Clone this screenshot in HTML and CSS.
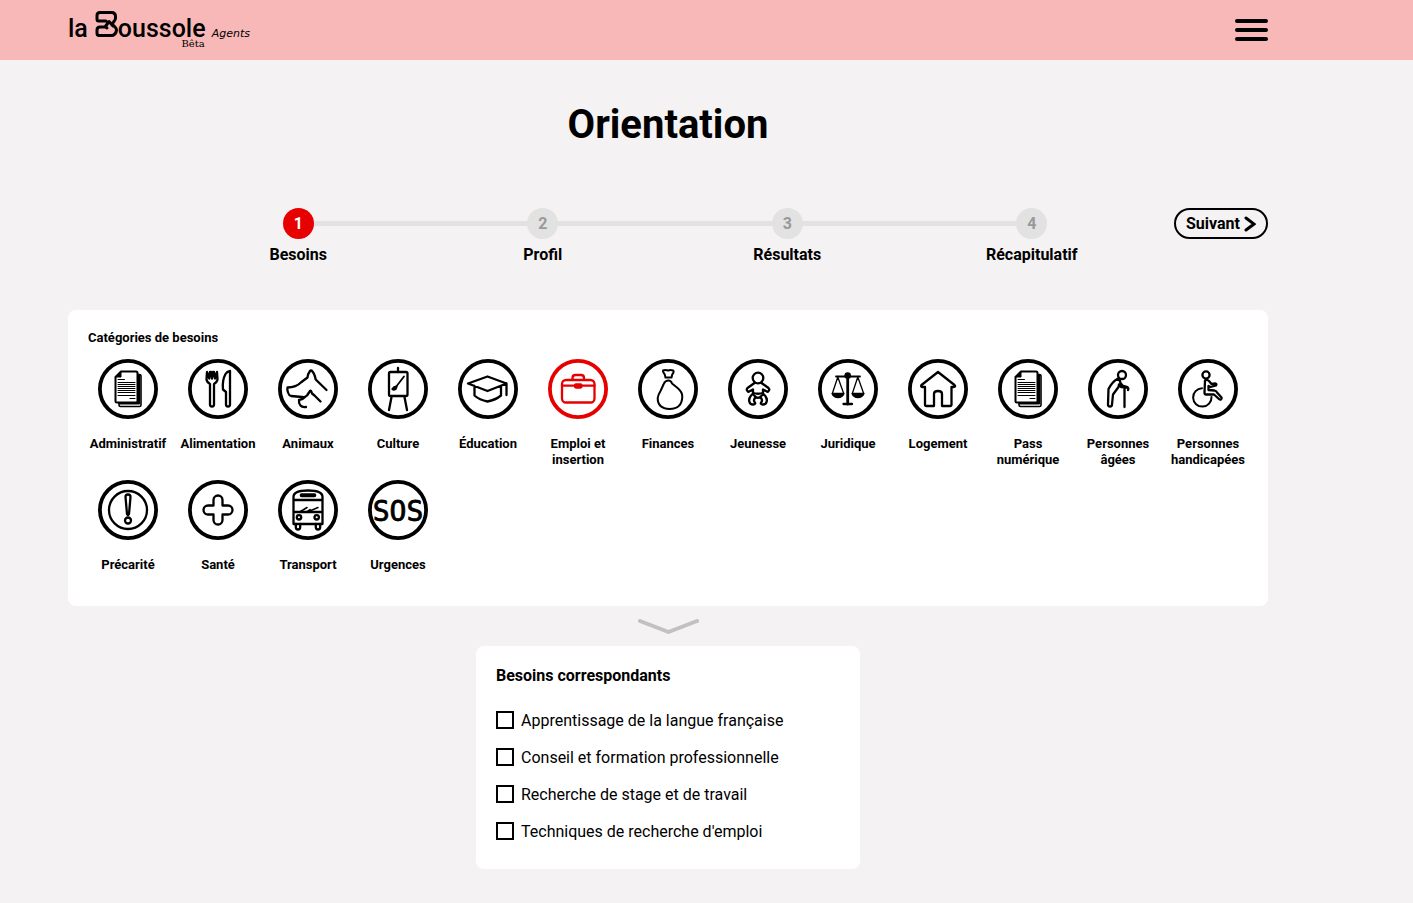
FILE: index.html
```html
<!DOCTYPE html>
<html lang="fr">
<head>
    <meta charset="UTF-8">
    <meta name="viewport" content="width=device-width, initial-scale=1.0">
    <title>La Boussole - Orientation</title>
    <link rel="stylesheet" href="styles.css">
</head>
<body>
    <svg class="sprite" aria-hidden="true">
        <symbol id="ring" viewBox="0 0 60 60">
            <circle cx="30" cy="30" r="28.1" fill="none" stroke-width="3.8"/>
        </symbol>
        <symbol id="documents" viewBox="0 0 60 60">
            <path d="M40 15.5h1.5q1.5 0 1.5 1.5v29q0 1.5-1.5 1.5h-19q-1.5 0-1.5-1.5v-2" fill="none" stroke-width="1.6"/>
            <path d="M41 16v28.5H22" fill="none" stroke-width="2.2"/>
            <path d="M23 12.5h15q1.5 0 1.5 1.5v28q0 1.5-1.5 1.5H19q-1.5 0-1.5-1.5V18z" fill="#fff" stroke-width="2"/>
            <path d="M23 12.5V18h-5.500z" fill="currentColor" stroke-width="1"/>
            <path d="M20 20.5h6.5M32 39.5h5" stroke-width="1"/>
            <path d="M20 23.5h17M20 25.5h17M20 27.5h17M20 29.5h17M20 31.5h17M20 33.5h17M20 36.5h17" stroke-width="1"/>
        </symbol>
    </svg>

    <header class="header">
        <div class="header-content">
            <a class="logo" href="#" aria-label="la Boussole Agents">
                <span>la</span>
                <svg class="logo-mark" viewBox="0 0 23 26" aria-hidden="true">
                    <path d="M11 10H3.5Q2 10 2 8V4.5Q2 1.5 5 1.5H16.5Q20.5 1.5 20.5 5.5V7Q20.5 9 19 10.500L17 13L20 16Q21.5 17.5 21.5 19Q21 24.5 16 24.5H4Q2 24.5 2 22V19Q2 16 5 16H10L14 10.5L18 15M10.5 16L12 17"/>
                </svg>
                <span class="logo-end">oussole<small class="beta">Bêta</small></span>
                <em class="agents">Agents</em>
            </a>
            <button class="burger" type="button" aria-label="Menu"><i></i><i></i><i></i></button>
        </div>
    </header>

    <main class="main">
        <h1>Orientation</h1>

        <div class="progress">
            <ol class="steps">
                <li class="step active"><span>1</span>Besoins</li>
                <li class="step"><span>2</span>Profil</li>
                <li class="step"><span>3</span>Résultats</li>
                <li class="step"><span>4</span>Récapitulatif</li>
            </ol>
            <button class="next" type="button">
                Suivant
                <svg viewBox="0 0 12 16" aria-hidden="true"><path d="M2 2l8 6-8 6"/></svg>
            </button>
        </div>

        <section class="categories">
            <h2>Catégories de besoins</h2>
            <div class="category-list">
                <button class="category" type="button">
                    <svg class="icon" viewBox="0 0 60 60"><use href="#ring"/><use href="#documents"/></svg>
                    Administratif
                </button>
                <button class="category" type="button">
                    <svg class="icon" viewBox="0 0 60 60">
                        <use href="#ring"/>
                        <path d="M19 13l-.5 7q0 3 3.5 5v20.5q0 2 2 2t2-2V25q3.5-2 3.5-5L29 13l-2 6.5L26 13h-1l-1 6.5L23 13h-1l-.8 6.5z"/>
                        <path d="M42 12v33.5q0 2-2 2t-2-2V33l-3-2.5q-1-9 2.5-15.5 1.5-2.5 4.500-3z"/>
                    </svg>
                    Alimentation
                </button>
                <button class="category" type="button">
                    <svg class="icon" viewBox="0 0 60 60">
                        <use href="#ring"/>
                        <path d="M48.500 31L37.700 20.500Q36.500 14 33.500 11.500Q32.700 11 32 12Q29.800 15 29.500 18.500L23.500 23Q18 28.500 9.500 28.500Q9 30.500 10 33.500Q11 36.500 13 37L24 38Q27 38.500 29 36.500L32 32Q33 30.500 34 34.500L36.500 36.500L42.500 42.500M27 38Q25 40.500 21 41Q20.500 44 22.500 46.500Q24 48.500 28 48"/>
                    </svg>
                    Animaux
                </button>
                <button class="category" type="button">
                    <svg class="icon" viewBox="0 0 60 60">
                        <use href="#ring"/>
                        <rect x="21" y="13" width="18.5" height="24" rx="1.5"/>
                        <path d="M30 9v4M23.5 38L21 51M36.5 38L39 51"/>
                        <path d="M36 17.5L27.5 28.5" stroke-width="1.8"/>
                        <path class="fill" d="M28.5 27.5l-1 2.5q-2 1-3 0 1-.5 2-2z"/>
                    </svg>
                    Culture
                </button>
                <button class="category" type="button">
                    <svg class="icon" viewBox="0 0 60 60">
                        <use href="#ring"/>
                        <path d="M10 24.5L29.5 17.5 48.5 24.5 29.5 32zM48.5 24.5V36M16.500 27v9.5q5 4.500 13 6 8-1.500 13.500-6V27"/>
                    </svg>
                    Éducation
                </button>
                <button class="category selected" type="button">
                    <svg class="icon" viewBox="0 0 60 60">
                        <use href="#ring"/>
                        <rect x="14" y="21" width="32.5" height="22.5" rx="4"/>
                        <path d="M24.5 21v-2q0-3 3-3h5.5q3 0 3 3v2M14 26.7h32.5"/>
                        <rect class="fill" x="27" y="25.5" width="6.5" height="3" rx="1"/>
                    </svg>
                    Emploi et insertion
                </button>
                <button class="category" type="button">
                    <svg class="icon thin" viewBox="0 0 60 60">
                        <use href="#ring"/>
                        <path d="M25 11.5q2.5-1 5 0 2.5-1 5 0 1 .5.5 2-1.5 1.5-2 5h-6q-.5-3.5-2-5-.8-1.5-.5-2z"/>
                        <path d="M30.5 21.5Q33 21.5 34 24.5L39 28.5Q44.5 33 44.3 37.5Q44 50 31.5 50Q19.5 49.5 19.7 39Q20 36 22.5 32L25.5 25.5Q27 21.5 30.5 21.5z"/>
                    </svg>
                    Finances
                </button>
                <button class="category" type="button">
                    <svg class="icon" viewBox="0 0 60 60">
                        <use href="#ring"/>
                        <circle cx="30" cy="19" r="5.3"/>
                        <path d="M26.5 24L19.5 29Q18 30.5 19.5 32Q20.5 33.5 22 32L25 30.5V33.5M33.5 24L40.5 29Q42 30.5 40.5 32Q39.5 33.5 38 32L35 30.5V33.5M25 34Q30 35.5 35 34"/>
                        <path d="M24.5 35Q20 39 21.5 43Q22 45.5 25 45.5Q28.5 45 26.5 43Q25 40.5 28 38zM35.5 35Q40 39 38.5 43Q38 45.5 35 45.5Q31.5 45 33.5 43Q35 40.5 32 38zM27 37.5Q30 40 33 37.5"/>
                    </svg>
                    Jeunesse
                </button>
                <button class="category" type="button">
                    <svg class="icon" viewBox="0 0 60 60">
                        <use href="#ring"/>
                        <path d="M18 17.5h24" stroke-width="1.8"/>
                        <path d="M29.7 17v28" stroke-width="2.8"/>
                        <path d="M25.5 45h8.5"/>
                        <circle class="fill" cx="29.7" cy="16.5" r="2.2"/>
                        <path d="M14.5 34l5.3-16 5.7 16M34.5 34l5.3-16L45.5 34" stroke-width="1.3"/>
                        <path class="fill" d="M14 34.5h12q-1.5 4-6 4t-6-4zM34 34.5h12q-1.5 4-6 4t-6-4z" stroke-width="1.3"/>
                    </svg>
                    Juridique
                </button>
                <button class="category" type="button">
                    <svg class="icon" viewBox="0 0 60 60">
                        <use href="#ring"/>
                        <path d="M30 13L13.5 26Q12.5 27.5 14 28H17V45.5Q17 47 18.5 47H26V35Q26 32 30 32T34 35V47H42Q43.5 47 43.5 45.5V28H46Q48 27.5 46.5 26z"/>
                    </svg>
                    Logement
                </button>
                <button class="category" type="button">
                    <svg class="icon" viewBox="0 0 60 60"><use href="#ring"/><use href="#documents"/></svg>
                    Pass numérique
                </button>
                <button class="category" type="button">
                    <svg class="icon" viewBox="0 0 60 60">
                        <use href="#ring"/>
                        <circle cx="34" cy="16" r="4"/>
                        <path d="M30 19.5Q24 23 20.500 30L20 45.5Q20 47.5 22 47.5T24 45.5L25 35.5L30.5 28L31 25.5L33 28L39.5 28.5Q41 29 40 31M30 19.5Q32 21 32.5 24L34.5 26.5L39.5 28M36.5 29.5V48"/>
                    </svg>
                    Personnes âgées
                </button>
                <button class="category" type="button">
                    <svg class="icon" viewBox="0 0 60 60">
                        <use href="#ring"/>
                        <circle cx="28" cy="16" r="3.6"/>
                        <path d="M24 29.2A9.2 9.2 0 1 0 33.5 38" stroke-width="2"/>
                        <path d="M27 21.5q2-1.5 4 .5l2.5 3 4-.5q1.5.5.5 2l-5.5 1.5-2-1v4l6 .5q2 .5 2.5 2l4.5 5q.5 1.5-.5 2t-2-.5L36 35.5h-8q-1.5 0-1.5-2z"/>
                    </svg>
                    Personnes handicapées
                </button>
                <button class="category" type="button">
                    <svg class="icon" viewBox="0 0 60 60">
                        <use href="#ring"/>
                        <circle cx="30" cy="30" r="19"/>
                        <path d="M27.5 17q0-2.5 2.5-2.5t2.5 2.5L31 34q-1 2-2 0z"/>
                        <circle cx="30" cy="40.5" r="3"/>
                    </svg>
                    Précarité
                </button>
                <button class="category" type="button">
                    <svg class="icon" viewBox="0 0 60 60">
                        <use href="#ring"/>
                        <path d="M25.5 25.5V20a4.5 4.5 0 0 1 9 0v5.500H40a4.5 4.5 0 0 1 0 9h-5.5V40a4.5 4.5 0 0 1-9 0v-5.5H20a4.5 4.5 0 0 1 0-9z"/>
                    </svg>
                    Santé
                </button>
                <button class="category" type="button">
                    <svg class="icon" viewBox="0 0 60 60">
                        <use href="#ring"/>
                        <path d="M15.5 44V17Q15.5 10.5 30 10.5T44.5 17V44zM15.5 20H44.5M15.5 32H44.5"/>
                        <rect class="fill" x="22.5" y="14" width="15" height="2.500" rx="1" stroke-width="1.5"/>
                        <path d="M22.5 31.5l6.5-4M30.5 31.5l9.5-4M32 29.5l-3 2" stroke-width="1.5"/>
                        <circle cx="21" cy="37.3" r="2.2"/>
                        <circle cx="38.7" cy="37.3" r="2.2"/>
                        <path d="M17.8 44v3q0 2.5 2.2 2.5t2.2-2.5v-3M37.8 44v3q0 2.5 2.2 2.5t2.2-2.5v-3"/>
                    </svg>
                    Transport
                </button>
                <button class="category" type="button">
                    <svg class="icon" viewBox="0 0 60 60">
                        <use href="#ring"/>
                        <text class="sos" x="30" y="41">SOS</text>
                    </svg>
                    Urgences
                </button>
            </div>
        </section>

        <svg class="chevron" viewBox="0 0 62 16" aria-hidden="true"><path d="M3 3l28.500 11L60 3"/></svg>

        <section class="needs">
            <h2>Besoins correspondants</h2>
            <label><input type="checkbox">Apprentissage de la langue française</label>
            <label><input type="checkbox">Conseil et formation professionnelle</label>
            <label><input type="checkbox">Recherche de stage et de travail</label>
            <label><input type="checkbox">Techniques de recherche d'emploi</label>
        </section>
    </main>
</body>
</html>
```
FILE: styles.css
```css
* {
    box-sizing: border-box;
    margin: 0;
    padding: 0;
}

body {
    background: #f4f2f3;
    color: #000;
    font-family: Roboto, "Liberation Sans", sans-serif;
    font-size: 16px;
}

button {
    background: none;
    border: none;
    color: inherit;
    font-family: inherit;
    cursor: pointer;
}

.sprite {
    position: absolute;
    width: 0;
    height: 0;
}

/* header */
.header {
    background: #f8b8b8;
}

.header-content {
    display: flex;
    align-items: center;
    justify-content: space-between;
    max-width: 1336px;
    height: 60px;
    padding: 0 68px;
}

.logo {
    display: flex;
    align-items: baseline;
    color: #000;
    font-size: 25px;
    font-weight: 500;
    line-height: 30px;
    text-decoration: none;
}

.logo-mark {
    width: 23px;
    height: 26px;
    margin-left: 7px;
    fill: none;
    stroke: #000;
    stroke-width: 3;
    stroke-linejoin: round;
    stroke-linecap: round;
}

.logo-end {
    position: relative;
}

.beta {
    position: absolute;
    right: 1px;
    bottom: -6px;
    font-family: "DejaVu Serif", serif;
    font-size: 10px;
    font-weight: normal;
    line-height: 12px;
}

.agents {
    margin-left: 6px;
    font-family: "DejaVu Sans", sans-serif;
    font-size: 11px;
    font-weight: normal;
}

.burger {
    display: flex;
    flex-direction: column;
    gap: 5px;
    width: 33px;
}

.burger i {
    height: 4px;
    border-radius: 2px;
    background: #000;
}

/* content */
.main {
    display: flex;
    flex-direction: column;
    max-width: 1336px;
    padding: 40px 68px 34px;
}

h1 {
    font-size: 40px;
    line-height: 50px;
    text-align: center;
}

.progress {
    display: flex;
    align-items: flex-start;
    gap: 20px;
    margin: 58px 0 45px;
    padding-left: 108px;
}

.steps {
    display: flex;
    flex: 1;
    list-style: none;
}

.step {
    display: flex;
    flex: 1;
    flex-direction: column;
    align-items: center;
    gap: 6px;
    position: relative;
    font-weight: bold;
    line-height: 20px;
}

.step span {
    width: 31px;
    height: 31px;
    border-radius: 50%;
    background: #e2e2e2;
    color: #999;
    line-height: 31px;
    text-align: center;
    z-index: 1;
}

.step.active span {
    background: #e60000;
    color: #fff;
}

.step + .step::before {
    content: "";
    position: absolute;
    top: 13px;
    right: 50%;
    width: 100%;
    height: 5px;
    background: #e2e2e2;
}

.next {
    display: flex;
    align-items: center;
    justify-content: center;
    gap: 4px;
    height: 31px;
    padding: 0 10px;
    border: 2px solid #000;
    border-radius: 16px;
    font-size: 16px;
    font-weight: bold;
}

.next svg {
    width: 12px;
    height: 16px;
    fill: none;
    stroke: #000;
    stroke-width: 3;
    stroke-linecap: round;
}

.categories {
    padding: 20px 15px 21px;
    border-radius: 8px;
    background: #fff;
}

.categories h2 {
    margin: 0 5px 13px;
    font-size: 13px;
    line-height: 16px;
}

.category-list {
    display: flex;
    flex-wrap: wrap;
}

.category {
    display: flex;
    flex-direction: column;
    align-items: center;
    width: 90px;
    padding: 0 5px 12px;
    font-size: 13px;
    font-weight: bold;
    line-height: 16px;
}

.category.selected .icon {
    color: #e60000;
}

.icon {
    width: 60px;
    height: 60px;
    margin-bottom: 17px;
    fill: none;
    stroke: currentColor;
    stroke-width: 2.3;
    stroke-linecap: round;
    stroke-linejoin: round;
}

.icon.thin {
    stroke-width: 2;
}

.icon .fill {
    fill: currentColor;
}

.icon .sos {
    fill: currentColor;
    stroke-width: 0.8;
    font-family: "DejaVu Sans Mono", monospace;
    font-size: 28px;
    font-weight: normal;
    text-anchor: middle;
}

.chevron {
    align-self: center;
    width: 62px;
    height: 16px;
    margin: 12px 0;
    fill: none;
    stroke: #c1c1c1;
    stroke-width: 4;
    stroke-linecap: round;
    stroke-linejoin: round;
}

.needs {
    display: flex;
    flex-direction: column;
    align-self: center;
    gap: 17px;
    width: 32%;
    min-width: 320px;
    padding: 21px 20px 27px;
    border-radius: 8px;
    background: #fff;
}

.needs h2 {
    margin-bottom: 9px;
    font-size: 16px;
    line-height: 18px;
}

.needs label {
    display: flex;
    align-items: flex-start;
    gap: 7px;
    line-height: 20px;
}

.needs input {
    appearance: none;
    width: 18px;
    height: 18px;
    border: 2px solid #000;
    background: #fff;
}

.needs input:checked {
    box-shadow: inset 0 0 0 3px #fff;
    background: #e60000;
}
```
